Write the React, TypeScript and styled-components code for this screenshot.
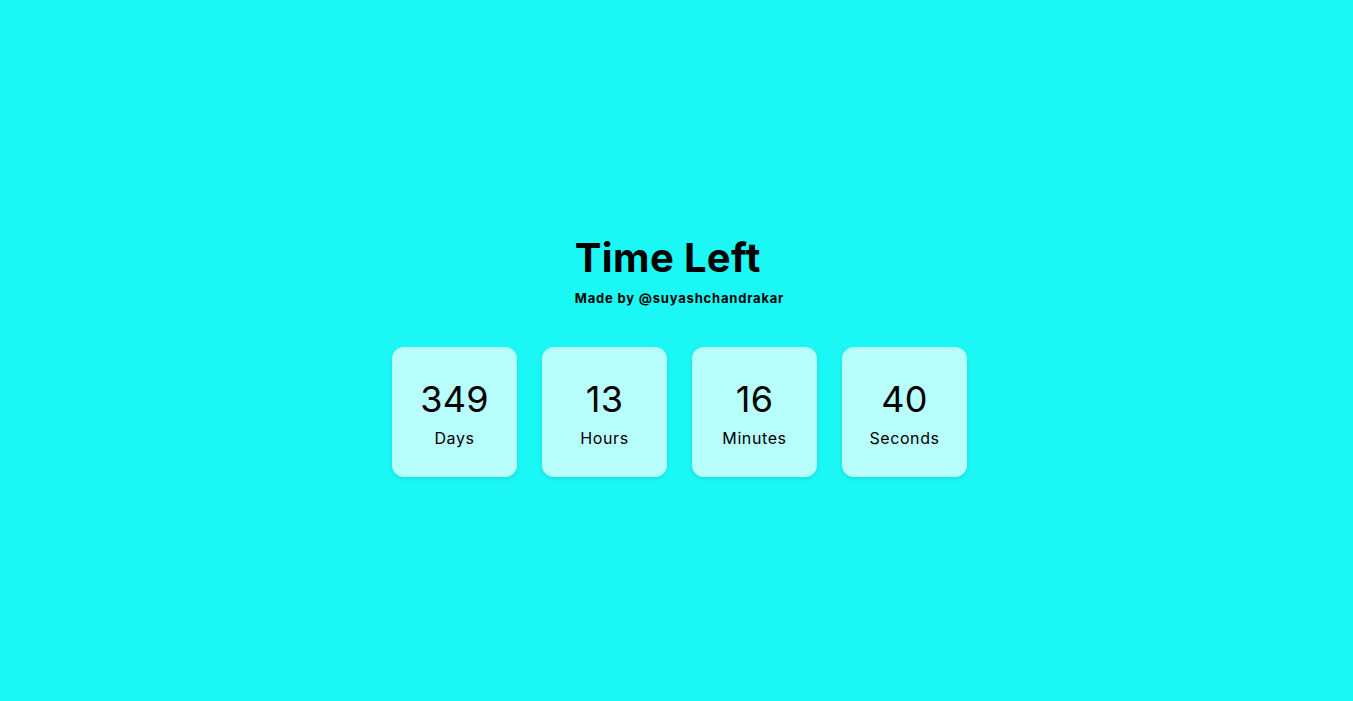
import React from "react";
import styled, { createGlobalStyle } from "styled-components";

const GlobalStyle = createGlobalStyle`
  * { box-sizing: border-box; }
  html, body { margin: 0; padding: 0; }
  body {
    background: #1bf7f5;
    font-family: "Inter", "Noto Sans", sans-serif;
    color: #000;
  }
`;

const Page = styled.main`
  min-height: 100vh;
  display: flex;
  flex-direction: column;
  align-items: center;
  justify-content: center;
  padding-top: 4px;
  padding-left: 6px;
`;

const Header = styled.header`
  display: flex;
  flex-direction: column;
  align-items: flex-start;
`;

const Title = styled.h1`
  margin: 0;
  font-size: 40px;
  line-height: 60px;
  font-weight: 700;
  letter-spacing: 0.35px;
`;

const Subtitle = styled.p`
  margin: 0;
  font-size: 13px;
  line-height: 20px;
  font-weight: 700;
  letter-spacing: 0.8px;
`;

const Row = styled.section`
  display: flex;
  gap: 25px;
  margin-top: 39px;
`;

const Card = styled.div`
  width: 125px;
  height: 130px;
  border-radius: 12px;
  background: #b8fefd;
  box-shadow: 0 2px 4px rgba(0, 120, 120, 0.18);
  display: flex;
  flex-direction: column;
  align-items: center;
  justify-content: center;
`;

const Value = styled.span`
  font-size: 36px;
  line-height: 52px;
  font-weight: 400;
  letter-spacing: 0.3px;
`;

const Label = styled.span`
  font-size: 16px;
  line-height: 26px;
  font-weight: 400;
  letter-spacing: 0.6px;
`;

const units = [
  { value: "349", label: "Days" },
  { value: "13", label: "Hours" },
  { value: "16", label: "Minutes" },
  { value: "40", label: "Seconds" },
];

export default function App() {
  return (
    <>
      <GlobalStyle />
      <Page>
        <Header>
          <Title>Time Left</Title>
          <Subtitle>Made by @suyashchandrakar</Subtitle>
        </Header>
        <Row>
          {units.map((u) => (
            <Card key={u.label}>
              <Value>{u.value}</Value>
              <Label>{u.label}</Label>
            </Card>
          ))}
        </Row>
      </Page>
    </>
  );
}
